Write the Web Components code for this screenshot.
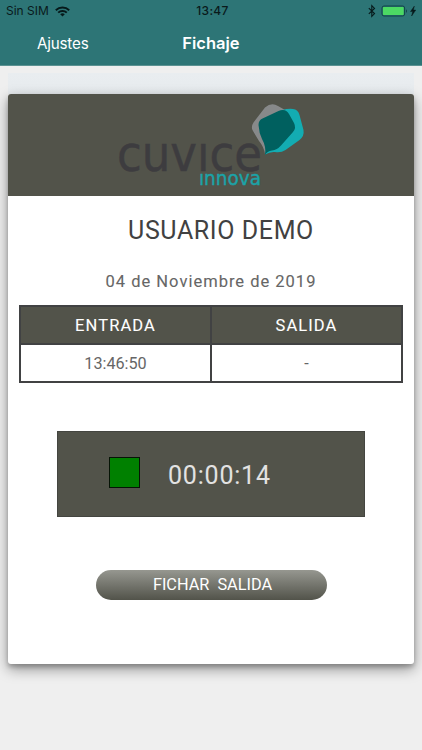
<!DOCTYPE html>
<html lang="es">
<head>
<meta charset="utf-8">
<meta name="viewport" content="width=device-width, initial-scale=1">
<title>Fichaje</title>
<style>
body {
    margin: 0;
    background-color: #efefef;
    font-family: Roboto, "Liberation Sans", sans-serif;
}
</style>
</head>
<body>
<fi-app></fi-app>

<template id="status-bar">
<style>
:host {
    display: grid;
    grid-template-columns: 1fr auto 1fr;
    align-items: center;
    height: 22px;
    padding: 0 5px 0 6px;
    color: #0a1a1b;
    font: 12px/22px Inter, "Liberation Sans", sans-serif;
}

.left, .right {
    display: flex;
    align-items: center;
}

.left {
    gap: 6px;
}

.right {
    justify-content: flex-end;
}

.time {
    padding-left: 2px;
    font-weight: 500;
    font-size: 12px;
    letter-spacing: 0.3px;
}

svg {
    display: block;
}
</style>
<div class="left">
    <span><slot name="carrier"></slot></span>
    <svg width="15" height="11" viewBox="0 0 15 11" fill="none" stroke="#06191a" stroke-width="1.9">
        <path d="M.8 4.2a9.6 9.6 0 0 1 13.4 0M3.2 6.7a6.1 6.1 0 0 1 8.6 0"/>
        <path d="M7.5 10.6 5.2 8.3a3.3 3.3 0 0 1 4.6 0z" fill="#06191a" stroke="none"/>
    </svg>
</div>
<span class="time"><slot name="time"></slot></span>
<div class="right">
    <svg width="49" height="14" viewBox="0 0 49 14">
        <path d="M.8 4.2 6.5 9.6 3.8 12.3V1.7l2.7 2.7L.8 9.8" fill="none" stroke="#06191a" stroke-width="1.1"/>
        <rect x="14" y="2" width="22.6" height="10" rx="2" fill="#2d7576" stroke="#114446"/>
        <rect x="14.9" y="2.9" width="20.8" height="8.2" rx=".8" fill="#4cd964"/>
        <path d="M38 5.2c1.3.5 1.3 3.1 0 3.6z" fill="#114446"/>
        <path d="M46.3 2.2 42.5 7.6h2.3L43.6 12l4.1-5.9h-2.4z" fill="#06191a" stroke="#06191a" stroke-width=".5"/>
    </svg>
</div>
</template>

<template id="nav-bar">
<style>
:host {
    display: grid;
    grid-template-columns: 1fr auto 1fr;
    align-items: center;
    height: 43px;
    color: white;
    font: 15px/20px Inter, "Liberation Sans", sans-serif;
}

.back {
    padding-left: 37px;
    font-size: 15.2px;
    letter-spacing: -0.2px;
}

.title {
    font-weight: 600;
    font-size: 16.5px;
    margin-top: -1px;
}
</style>
<span class="back"><slot name="back"></slot></span>
<span class="title"><slot></slot></span>
</template>

<template id="brand-logo">
<style>
:host {
    display: flex;
    height: 102px;
    background-color: #52534a;
}

svg {
    display: block;
}

text {
    font-family: "DejaVu Sans", "Open Sans", sans-serif;
}
</style>
<svg width="405" height="102" viewBox="0 0 405 102">
    <clipPath id="main"><path d="M100 47h160v32H100z"/></clipPath>
    <clipPath id="sub"><path d="M180 79h80v15h-80z"/></clipPath>
    <path d="M257 13.500q6.500-5.500 13-1.500l7 4-16 42-4 2q-1-7-6-13l-6-10q-2.500-4 .5-8.500z" fill="#87898a"/>
    <path d="M266 20q10-6 19-5 5 .6 6.500 6l4 15q1 6-4 10l-14 10q-4.500 3-10.500 2-5-.5-10 2.500z" fill="#13acb2"/>
    <path d="M257 61q1.500-8-3-16-3-6-3.500-14 0-5 4-6.500l16-7.500q7-3 10.500 3l5 9q2.500 5-1 9l-12 13.500q-4 4.500-9 5-5 .5-7 4.500z" fill="#00605f"/>
    <g clip-path="url(#main)">
        <text x="109" y="76.500" font-size="49" textLength="145" lengthAdjust="spacingAndGlyphs" fill="#3d3c3f" stroke="#3d3c3f" stroke-width=".5">cuvice</text>
    </g>
    <g clip-path="url(#sub)">
        <text x="191" y="91" font-size="20" textLength="62" lengthAdjust="spacingAndGlyphs" fill="#1ba3a8" stroke="#1ba3a8" stroke-width=".4">innova</text>
    </g>
</svg>
</template>

<template id="time-table">
<style>
:host {
    display: block;
}

table {
    width: 100%;
    border-collapse: collapse;
    table-layout: fixed;
    text-align: center;
}

th, td {
    box-sizing: border-box;
    padding: 0;
    border: 2px solid #414243;
}

th {
    height: 38px;
    background-color: #52534a;
    color: white;
    font-size: 16.5px;
    font-weight: 400;
    letter-spacing: 1.1px;
    -webkit-text-stroke: 0.1px;
}

td {
    height: 38px;
    color: #666;
    font-size: 16.2px;
}
</style>
<table>
    <tr><th>ENTRADA</th><th>SALIDA</th></tr>
    <tr><td><slot name="in"></slot></td><td><slot name="out">-</slot></td></tr>
</table>
</template>

<template id="work-timer">
<style>
:host {
    display: flex;
    box-sizing: border-box;
    width: 308px;
    height: 86px;
    padding: 25px 0 0 51px;
    border: 1px solid #444540;
    background-color: #52534a;
    color: #e2e2e2;
}

.state {
    box-sizing: border-box;
    width: 31px;
    height: 31px;
    margin-right: 28px;
    border: 1px solid #061406;
    background-color: #008000;
}

.count {
    padding-top: 3px;
    font-size: 25px;
    line-height: 32px;
    letter-spacing: 0.8px;
}
</style>
<div class="state"></div>
<div class="count"><slot></slot></div>
</template>

<template id="pill-button">
<style>
:host {
    display: block;
}

button {
    display: block;
    width: 231px;
    height: 30px;
    padding: 0 0 0 3px;
    border: 0;
    border-radius: 15px;
    background: linear-gradient(#969790, #52534a);
    color: white;
    font: 16.3px/30px Roboto, "Liberation Sans", sans-serif;
    white-space: pre;
}
</style>
<button><slot></slot></button>
</template>

<template id="user-card">
<style>
:host {
    display: flex;
    flex-direction: column;
    height: 570px;
    border-radius: 3px;
    background-color: white;
    box-shadow: 0 5px 14px rgba(0,0,0,0.4), 0 3px 4px rgba(0,0,0,0.2);
    overflow: hidden;
}

h1 {
    margin: 19px 0 0 20px;
    color: #414141;
    font-size: 25px;
    font-weight: 400;
    line-height: 32px;
    letter-spacing: 0.6px;
    text-align: center;
}

.date {
    margin: 24px 0 12px;
    color: #666;
    font-size: 16.5px;
    line-height: 22px;
    letter-spacing: 1px;
    text-align: center;
    -webkit-text-stroke: 0.1px;
}

fi-table {
    margin: 0 11px;
}

fi-timer {
    align-self: center;
    margin-top: 48px;
}

fi-button {
    align-self: center;
    margin-top: 53px;
}
</style>
<fi-logo></fi-logo>
<h1><slot name="user"></slot></h1>
<div class="date"><slot name="date"></slot></div>
<fi-table><span slot="in">13:46:50</span></fi-table>
<fi-timer>00:00:14</fi-timer>
<fi-button>FICHAR  SALIDA</fi-button>
</template>

<template id="app">
<style>
:host {
    display: block;
    height: 750px;
    overflow: hidden;
}

header {
    background-color: #2d7576;
    border-bottom: 1px solid #5b9292;
}

main {
    margin: 7px 8px 0;
    padding-top: 21px;
    background: linear-gradient(#e9edf0, #e7ebee) top / 100% 21px no-repeat;
}
</style>
<header>
    <fi-status><span slot="carrier">Sin SIM</span><span slot="time">13:47</span></fi-status>
    <fi-nav><span slot="back">Ajustes</span>Fichaje</fi-nav>
</header>
<main>
    <fi-card><span slot="user">USUARIO DEMO</span><span slot="date">04 de Noviembre de 2019</span></fi-card>
</main>
</template>

<script>
class Base extends HTMLElement {

    constructor() {
        super();
        const template = document.getElementById(this.constructor.template);
        const root = this.attachShadow({ mode: 'open' });
        root.appendChild(template.content.cloneNode(true));
    }
}

customElements.define('fi-status', class Status extends Base {
    static template = 'status-bar';
});

customElements.define('fi-nav', class Nav extends Base {
    static template = 'nav-bar';
});

customElements.define('fi-logo', class Logo extends Base {
    static template = 'brand-logo';
});

customElements.define('fi-table', class Table extends Base {
    static template = 'time-table';
});

customElements.define('fi-timer', class Timer extends Base {
    static template = 'work-timer';
});

customElements.define('fi-button', class Button extends Base {
    static template = 'pill-button';
});

customElements.define('fi-card', class Card extends Base {
    static template = 'user-card';
});

customElements.define('fi-app', class App extends Base {
    static template = 'app';
});
</script>
</body>
</html>
